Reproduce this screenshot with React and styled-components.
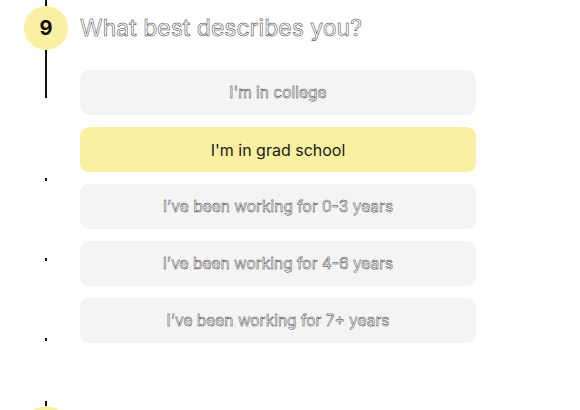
import React, { useState } from "react";
import styled, { createGlobalStyle } from "styled-components";

const GlobalStyle = createGlobalStyle`
    html, body {
        margin: 0;
        padding: 0;
        background: #ffffff;
        font-family: Inter, "Liberation Sans", Arial, sans-serif;
    }
`;

const Page = styled.div`
    width: 580px;
    height: 410px;
    overflow: hidden;
    display: grid;
    grid-template-columns: 92px 1fr;
`;

const Rail = styled.div`
    display: flex;
    flex-direction: column;
    align-items: center;
`;

const Line = styled.div`
    width: 2px;
    height: ${({ h }) => h}px;
    margin-top: ${({ gap }) => gap || 0}px;
    background: #111;
    flex-shrink: 0;
`;

const Step = styled.div`
    width: 44px;
    height: 44px;
    flex-shrink: 0;
    border-radius: 50%;
    background: #fbf0a2;
    display: flex;
    align-items: center;
    justify-content: center;
    font-size: 20px;
    font-weight: 700;
    color: #111;
`;

const Content = styled.div`
    display: flex;
    flex-direction: column;
    margin-left: -12px;
`;

const Question = styled.h2`
    margin: 14px 0 0;
    height: 31px;
    font-size: 23px;
    font-weight: 400;
    color: #fff;
    -webkit-text-stroke: 0.5px #333;
`;

const Options = styled.div`
    display: flex;
    flex-direction: column;
    gap: 12px;
    margin-top: 25px;
    width: 396px;
`;

const Option = styled.button`
    height: 45px;
    border: none;
    border-radius: 9px;
    font-family: inherit;
    font-size: ${({ active }) => (active ? "16px" : "15.5px")};
    cursor: pointer;
    background: ${({ active }) => (active ? "#fbf0a2" : "#f4f4f4")};
    color: ${({ active }) => (active ? "#1a1a1a" : "#fff")};
    -webkit-text-stroke: ${({ active }) => (active ? "0" : "0.45px #333")};
`;

const choices = [
    "I'm in college",
    "I'm in grad school",
    "I’ve been working for 0-3 years",
    "I’ve been working for 4-6 years",
    "I’ve been working for 7+ years",
];

export default function App() {
    const [picked, setPicked] = useState(1);

    return (
        <>
            <GlobalStyle />
            <Page>
                <Rail>
                    <Line h={6} />
                    <Step>9</Step>
                    <Line h={48} />
                    <Line h={3} gap={80} />
                    <Line h={3} gap={77} />
                    <Line h={3} gap={77} />
                    <Line h={5} gap={60} />
                    <Step />
                </Rail>
                <Content>
                    <Question>What best describes you?</Question>
                    <Options>
                        {choices.map((c, i) => (
                            <Option key={c} active={i === picked} onClick={() => setPicked(i)}>
                                {c}
                            </Option>
                        ))}
                    </Options>
                </Content>
            </Page>
        </>
    );
}
